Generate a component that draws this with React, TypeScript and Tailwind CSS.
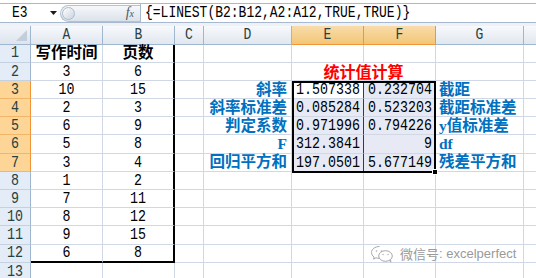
import React from 'react';

const MONO = "font-['Liberation_Mono',monospace]";
const CJK = "font-['Liberation_Serif','Noto_Sans_CJK_SC',serif]";

const W: Record<string, string> = {
  A: 'w-[72px]',
  B: 'w-[72px]',
  C: 'w-[29px]',
  D: 'w-[88px]',
  E: 'w-[72px]',
  F: 'w-[72px]',
  G: 'w-[88px]',
};

const pairs: [number, number][] = [
  [3, 6], [10, 15], [2, 3], [6, 9], [5, 8], [3, 4], [1, 2], [7, 11], [8, 12], [9, 15], [6, 8],
];

const stats: Record<number, [string, string, string, string]> = {
  3: ['斜率', '1.507338', '0.232704', '截距'],
  4: ['斜率标准差', '0.085284', '0.523203', '截距标准差'],
  5: ['判定系数', '0.971996', '0.794226', 'y值标准差'],
  6: ['F', '312.3841', '9', 'df'],
  7: ['回归平方和', '197.0501', '5.677149', '残差平方和'],
};

const Num = ({ children }: { children: React.ReactNode }) => (
  <span className={`${MONO} inline-block scale-y-[1.2] text-[13.33px] leading-none text-black`}>{children}</span>
);

const grid = 'shrink-0 h-full border-r border-b border-[#d0d7e5] flex items-center';

const FormulaBar = () => (
  <div className="h-[26px] bg-white pt-[3px]">
    <div className="flex h-[20px] border-y border-[#a7b9cf] bg-white">
      <div className="w-[60px] shrink-0 flex items-center pl-[12px] relative">
        <span className={`${MONO} inline-block scale-y-[1.25] text-[13px] text-black`}>E3</span>
        <svg className="absolute left-[50px] top-[7px]" width="7" height="4" viewBox="0 0 7 4">
          <path d="M0 0h7L3.5 4z" fill="#1b1b1b" />
        </svg>
      </div>
      <div className="w-[80px] shrink-0 flex items-center">
        <div className="h-[17px] w-full rounded-l-full border border-r-0 border-[#b3c1d2] bg-gradient-to-b from-[#f6f8fb] to-[#dbe2eb] flex items-center">
          <div className="ml-[1px] w-[13px] h-[13px] rounded-full border border-[#aebbcc] bg-gradient-to-br from-white to-[#c9d3df]" />
          <span className="ml-auto mr-[6px] font-['Liberation_Serif',serif] italic text-[14px] leading-none text-[#4b5866]">
            f<span className="text-[10px]">x</span>
          </span>
        </div>
      </div>
      <div className="flex-1 border-l border-[#a7b9cf] flex items-center pl-[4px]">
        <span className={`${MONO} inline-block scale-y-[1.25] text-[13px] text-black whitespace-pre`}>
          {'{=LINEST(B2:B12,A2:A12,TRUE,TRUE)}'}
        </span>
      </div>
    </div>
    <div className="h-[3px] bg-[#eef2f7]" />
  </div>
);

const ColHeader = () => (
  <div className="flex h-[18.5px]">
    <div className="w-[31px] shrink-0 h-full border-r border-b border-[#9eb6ce] bg-gradient-to-b from-[#f2f5f9] to-[#dde4ed] relative">
      <svg className="absolute right-[3px] bottom-[3px]" width="11" height="11" viewBox="0 0 11 11">
        <path d="M11 0V11H0z" fill="#c3cddb" />
      </svg>
    </div>
    {['A', 'B', 'C', 'D', 'E', 'F', 'G'].map((c) => {
      const hot = c === 'E' || c === 'F';
      return (
        <div
          key={c}
          className={`${W[c]} shrink-0 h-full flex items-center justify-center border-r border-b ${
            hot
              ? 'border-[#f29536] bg-gradient-to-b from-[#f9dcaa] to-[#f2c676]'
              : 'border-[#9eb6ce] bg-gradient-to-b from-[#f7f9fc] to-[#e1e7ef]'
          }`}
        >
          <span className={`${MONO} inline-block scale-y-[1.2] text-[13px] leading-none text-[#27413e]`}>{c}</span>
        </div>
      );
    })}
    <div className="flex-1 h-full border-b border-[#9eb6ce] bg-gradient-to-b from-[#f7f9fc] to-[#e1e7ef]" />
  </div>
);

const Row = ({ r }: { r: number }) => {
  const hot = r >= 3 && r <= 7;
  const s = stats[r];
  const pair = r >= 2 && r <= 12 ? pairs[r - 2] : null;
  const inBox = r <= 12;
  const boxBottom = r === 12 ? 'border-b-2 border-b-black' : '';

  return (
    <div className="flex h-[18.2px]">
      <div
        className={`w-[31px] shrink-0 h-full flex items-center justify-center border-r border-b ${
          hot ? 'bg-[#fdd597] border-[#f3b567] border-r-[#f29536]' : 'bg-[#e4ecf7] border-[#c3d1e3] border-r-[#9eb6ce]'
        }`}
      >
        <span className={`${MONO} inline-block scale-y-[1.2] text-[13.33px] leading-none text-[#27413e]`}>{r}</span>
      </div>

      <div className={`${W.A} ${grid} justify-center ${boxBottom}`}>
        {r === 1 && <span className={`${CJK} text-[15.5px] font-bold leading-none text-black`}>写作时间</span>}
        {pair && <Num>{pair[0]}</Num>}
      </div>

      <div className={`${W.B} ${grid} justify-center ${inBox ? 'border-r-2 border-r-black' : ''} ${boxBottom}`}>
        {r === 1 && <span className={`${CJK} text-[15.5px] font-bold leading-none text-black`}>页数</span>}
        {pair && <Num>{pair[1]}</Num>}
      </div>

      <div className={`${W.C} ${grid}`} />

      <div className={`${W.D} ${grid} justify-end pr-[4px]`}>
        {s && <span className={`${CJK} text-[15.5px] font-bold leading-none text-[#0070c0]`}>{s[0]}</span>}
      </div>

      {r === 2 ? (
        <div className={`w-[144px] ${grid} justify-center`}>
          <span className="font-['Noto_Sans_CJK_SC',sans-serif] text-[16px] font-bold leading-none text-[#ff0000]">统计值计算</span>
        </div>
      ) : (
        <>
          <div
            className={`${W.E} ${grid} justify-end pr-[3px] ${s ? 'border-r-[#3a3a3a]' : ''} ${
              s && r !== 3 ? 'bg-[#e7eaf4]' : ''
            }`}
          >
            {s && <Num>{s[1]}</Num>}
          </div>
          <div className={`${W.F} ${grid} justify-end pr-[3px] ${s ? 'bg-[#e7eaf4]' : ''}`}>
            {s && <Num>{s[2]}</Num>}
          </div>
        </>
      )}

      <div className={`${W.G} ${grid} pl-[3px]`}>
        {s && <span className={`${CJK} text-[15.5px] font-bold leading-none text-[#0070c0]`}>{s[3]}</span>}
      </div>

      <div className="flex-1 h-full border-b border-[#d0d7e5]" />
    </div>
  );
};

const WeChat = () => (
  <svg width="24" height="18" viewBox="0 0 24 18" fill="none" stroke="#a8a8a8" strokeWidth="1">
    <path d="M9.5 1.5C5 1.5 1.5 4.2 1.5 7.5c0 1.8 1 3.4 2.6 4.5l-.6 2.1 2.5-1.3c1 .3 2 .5 3.1.5" fill="white" />
    <circle cx="6.5" cy="6" r=".8" fill="#a8a8a8" stroke="none" />
    <circle cx="11.5" cy="6" r=".8" fill="#a8a8a8" stroke="none" />
    <ellipse cx="15.5" cy="11" rx="6.8" ry="5.3" fill="white" />
    <path d="M19.5 15.2l1.3 2-.2-2.6" />
    <circle cx="13" cy="9.5" r=".7" fill="#a8a8a8" stroke="none" />
    <circle cx="18" cy="9.5" r=".7" fill="#a8a8a8" stroke="none" />
  </svg>
);

export default function App() {
  return (
    <div className="relative w-[536px] h-[278px] overflow-hidden bg-white">
      <FormulaBar />
      <div className="relative">
        <ColHeader />
        {Array.from({ length: 13 }, (_, i) => (
          <Row key={i} r={i + 1} />
        ))}
        {/* selection E3:F7 */}
        <div className="absolute left-[292px] top-[55px] w-[144px] h-[92px] border-2 border-black pointer-events-none">
          <div className="absolute -right-[4px] -bottom-[4px] w-[6px] h-[6px] bg-black border border-white" />
        </div>
      </div>
      <div className="absolute left-[370px] top-[244px] flex items-center gap-[6px] text-[13px] text-[#9a9a9a]">
        <WeChat />
        <span className="font-['Noto_Sans_CJK_SC',sans-serif]">微信号</span>
        <span className="font-['Liberation_Sans',sans-serif] -ml-[6px]">: excelperfect</span>
      </div>
    </div>
  );
}
